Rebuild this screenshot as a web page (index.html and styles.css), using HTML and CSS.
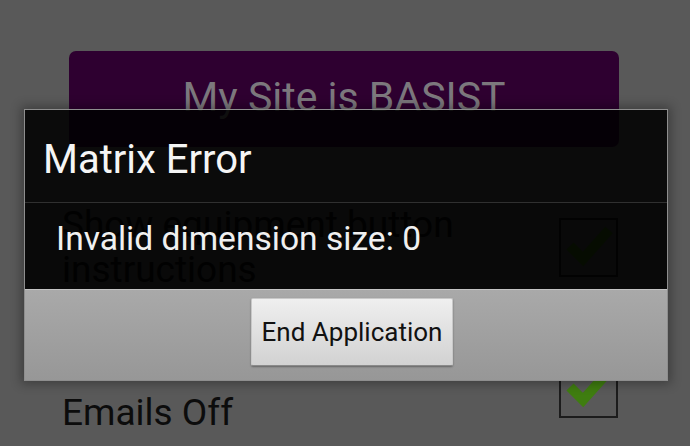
FILE: index.html
```html
<!DOCTYPE html>
<html>
<head>
<meta charset="utf-8">
<link rel="stylesheet" href="styles.css">
</head>
<body>
<div class="screen">
  <div class="site-btn">My Site is BASIST</div>
  <div class="row row-first">
    <div class="label">Show equipment button<br>instructions</div>
    <div class="check"><svg width="59" height="59" viewBox="0 0 59 59"><polyline points="11,28 24,41 50,12" fill="none" stroke="#3f7d10" stroke-width="10" stroke-linejoin="miter"/></svg></div>
  </div>
  <div class="row row-second">
    <div class="label label-second">Emails Off</div>
    <div class="check"><svg width="59" height="59" viewBox="0 0 59 59"><polyline points="11,28 24,41 50,12" fill="none" stroke="#3f7d10" stroke-width="10" stroke-linejoin="miter"/></svg></div>
  </div>
  <div class="dialog">
    <div class="dlg-title">Matrix Error</div>
    <div class="dlg-msg">Invalid dimension size: 0</div>
    <div class="dlg-bar"><button class="dlg-btn">End Application</button></div>
  </div>
</div>
</body>
</html>
```
FILE: styles.css
```css
html, body {
  margin: 0;
  padding: 0;
  background: #595959;
  font-family: Roboto, "Noto Sans", sans-serif;
}
.screen {
  position: relative;
  width: 690px;
  height: 446px;
  overflow: hidden;
  padding-top: 51px;
  box-sizing: border-box;
}
.site-btn {
  margin: 0 71px 0 69px;
  height: 96px;
  box-sizing: border-box;
  padding-top: 22px;
  line-height: 48px;
  background: #2e0030;
  border-radius: 7px;
  color: #7c787d;
  font-size: 41px;
  text-align: center;
}
.row {
  display: flex;
  justify-content: space-between;
  padding: 0 72px 0 62px;
}
.row-first {
  margin-top: 55px;
  align-items: center;
}
.row-second {
  margin-top: 67px;
  align-items: flex-start;
}
.label {
  font-size: 37px;
  line-height: 45px;
  color: #0c0c0c;
}
.label-second {
  margin-top: 31px;
}
.check {
  width: 59px;
  height: 59px;
  box-sizing: border-box;
  border: 2px solid #1c1c1c;
  position: relative;
}
.check svg {
  position: absolute;
  left: -2px;
  top: -2px;
}
.dialog {
  position: absolute;
  left: 24px;
  top: 109px;
  width: 644px;
  height: 272px;
  box-sizing: border-box;
  border: 1px solid #8e8e8e;
  box-shadow: 0 0 10px 3px rgba(0, 0, 0, 0.3);
  display: flex;
  flex-direction: column;
}
.dlg-title {
  height: 93px;
  box-sizing: border-box;
  border-bottom: 1px solid #303030;
  background: rgba(0, 0, 0, 0.88);
  color: #f5f5f5;
  font-size: 40px;
  line-height: 48px;
  padding: 26px 0 0 18px;
}
.dlg-msg {
  height: 86px;
  box-sizing: border-box;
  background: rgba(0, 0, 0, 0.9);
  color: #f0f0f0;
  font-size: 33.6px;
  line-height: 40px;
  padding: 16px 0 0 31px;
}
.dlg-bar {
  flex: 1;
  border-top: 1px solid #c4c4c4;
  background: linear-gradient(#a9a9a9, #979797);
  display: flex;
  justify-content: center;
  align-items: flex-start;
  padding: 8px 0 0 12px;
}
.dlg-btn {
  width: 202px;
  height: 68px;
  box-sizing: border-box;
  background: linear-gradient(#efefef, #d2d2d2);
  border: 1px solid #c8c8c8;
  border-bottom-color: #8a8a8a;
  border-radius: 2px;
  box-shadow: 0 1px 2px rgba(0, 0, 0, 0.35);
  font-family: Roboto, "Noto Sans", sans-serif;
  font-size: 26px;
  color: #111;
  padding: 0;
}
```
